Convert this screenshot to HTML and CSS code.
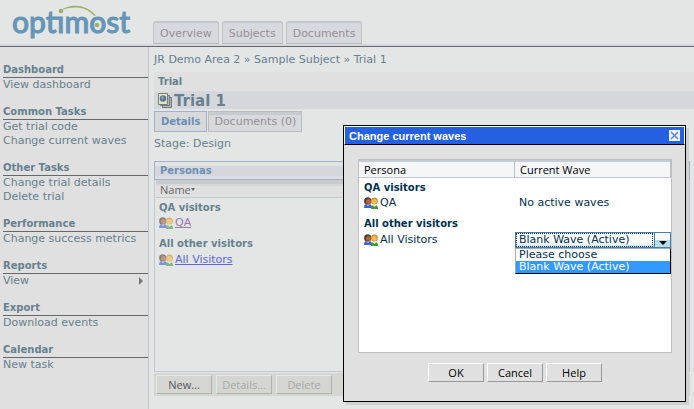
FILE: index.html
```html
<!DOCTYPE html>
<html lang="en">
<head>
<meta charset="utf-8">
<title>Optimost - Trial 1</title>
<link rel="stylesheet" href="styles.css">
</head>
<body>
<svg class="defs" aria-hidden="true">
  <symbol id="people" viewBox="0 0 14 12">
    <path d="M0 11c0-3 1-4 3-4h2c2 0 3 1 3 4z" fill="#3c62cf"/>
    <path d="M2 7l2 2 2-2z" fill="#dfe8fb"/>
    <circle cx="3.7" cy="3.9" r="3.6" fill="#4d3b38"/>
    <circle cx="4.5" cy="4.6" r="2.5" fill="#b0643e"/>
    <path d="M7 12c0-3 1-4 3-4h1c2 0 3 1 3 4z" fill="#3f9a3c"/>
    <path d="M8.500 8l2 2 2-2z" fill="#e2f2d4"/>
    <circle cx="10.400" cy="4" r="3.500" fill="#d0902c"/>
    <circle cx="10.400" cy="4.600" r="2.500" fill="#f5b95c"/>
  </symbol>
</svg>
<div class="page">
  <header class="top">
    <a class="logo" href="#" aria-label="optimost">
      <svg width="124" height="42" viewBox="0 0 124 42">
        <text x="2" y="33" class="logo-text">optımost</text>
        <path d="M50 10.500C61 3 77 4 86 16L83.500 15.500C76 6.500 64 5.500 50 10.500z" fill="#9db166"/>
        <circle cx="51" cy="11" r="2.300" fill="#9db166"/>
        <circle cx="87" cy="25" r="2.300" fill="#9db166"/>
      </svg>
    </a>
    <nav class="main-tabs">
      <a href="#">Overview</a><a href="#">Subjects</a><a href="#">Documents</a>
    </nav>
  </header>
  <div class="columns">
    <aside class="side">
      <section><h2>Dashboard</h2><a href="#">View dashboard</a></section>
      <section><h2>Common Tasks</h2><a href="#">Get trial code</a><a href="#">Change current waves</a></section>
      <section><h2>Other Tasks</h2><a href="#">Change trial details</a><a href="#">Delete trial</a></section>
      <section><h2>Performance</h2><a href="#">Change success metrics</a></section>
      <section><h2>Reports</h2><a href="#" class="more">View</a></section>
      <section><h2>Export</h2><a href="#">Download events</a></section>
      <section><h2>Calendar</h2><a href="#">New task</a></section>
    </aside>
    <main>
      <p class="crumbs">JR Demo Area 2 » Sample Subject » Trial 1</p>
      <p class="kind">Trial</p>
      <h1>
        <svg width="14" height="15" viewBox="0 0 14 15" aria-hidden="true">
          <path d="M4.500 4.500h9v10h-9z" fill="#b5b5bc" stroke="#77777f"/>
          <path d="M2.500 2.500h9v10h-9z" fill="#b5b5bc" stroke="#77777f"/>
          <path d="M.5.5h9v11h-9z" fill="#dfe6b8" stroke="#77817b"/>
          <circle cx="5" cy="5.500" r="3.200" fill="#5b6fa8"/><path d="M3 4l2-1 1 2-2 2z" fill="#8fb387"/>
        </svg>Trial 1</h1>
      <nav class="sub-tabs"><a href="#" class="on">Details</a><a href="#">Documents (0)</a></nav>
      <p class="stage">Stage: Design</p>
      <section class="personas">
        <h2>Personas</h2>
        <div class="list">
          <table>
            <thead><tr><th>Name<i class="sort"></i></th></tr></thead>
            <tbody>
              <tr class="group"><td>QA visitors</td></tr>
              <tr><td><span class="who"><svg class="people"><use href="#people"/></svg><a href="#" class="seen">QA</a></span></td></tr>
              <tr class="group"><td>All other visitors</td></tr>
              <tr><td><span class="who"><svg class="people"><use href="#people"/></svg><a href="#">All Visitors</a></span></td></tr>
            </tbody>
          </table>
        </div>
        <div class="tools"><button>New...</button><button disabled>Details...</button><button disabled>Delete</button></div>
      </section>
    </main>
  </div>
</div>
<div class="dialog" role="dialog" aria-labelledby="dialog-title">
  <div class="bar">
    <h2 id="dialog-title">Change current waves</h2>
    <button class="close" aria-label="Close"><svg width="9" height="9" viewBox="0 0 9 9"><path d="M1 1l7 7M8 1l-7 7" stroke="#5e86d8" stroke-width="1.500"/></svg></button>
  </div>
  <div class="content">
    <div class="waves">
      <table>
        <thead><tr><th>Persona</th><th>Current Wave</th></tr></thead>
        <tbody>
          <tr class="group"><td colspan="2">QA visitors</td></tr>
          <tr><td><span class="who"><svg class="people"><use href="#people"/></svg>QA</span></td><td class="none">No active waves</td></tr>
          <tr class="group"><td colspan="2">All other visitors</td></tr>
          <tr><td><label class="who" for="wave"><svg class="people"><use href="#people"/></svg>All Visitors</label></td>
            <td class="pick"><div class="combo">
              <select id="wave"><option>Please choose</option><option selected>Blank Wave (Active)</option></select>
              <span class="arrow"></span>
              <ul class="options"><li>Please choose</li><li class="chosen">Blank Wave (Active)</li></ul>
            </div></td></tr>
        </tbody>
      </table>
    </div>
    <div class="actions"><button>OK</button><button>Cancel</button><button>Help</button></div>
  </div>
</div>
</body>
</html>
```
FILE: styles.css
```css
* { box-sizing: border-box; }
body {
  margin: 0;
  background: #e4e6e5;
  color: #66808e;
  font: 11px/14px "DejaVu Sans", Verdana, sans-serif;
}
h1, h2, p, ul { margin: 0; padding: 0; }
h2 { font-size: 10px; line-height: 14px; }
a { color: inherit; text-decoration: none; }
button, select { font: inherit; color: inherit; margin: 0; }
table { border-collapse: separate; border-spacing: 0; width: 100%; table-layout: fixed; }
th, td { padding: 0; text-align: left; }
.defs { position: absolute; width: 0; height: 0; }

.page { min-height: 100vh; display: flex; flex-direction: column; }
.top {
  display: flex;
  align-items: flex-end;
  height: 47px;
  border-bottom: 1px solid #66686d;
  background: linear-gradient(#d6d6dd, #d6d6dd) bottom / 100% 2px no-repeat;
}
.logo { width: 153px; padding-left: 10px; height: 46px; }
.logo svg { display: block; }
.logo-text { font: 500 30px Lato, sans-serif; fill: #6596b8; stroke: #6596b8; stroke-width: 1px; }
.main-tabs { display: flex; gap: 3px; }
.main-tabs a {
  padding: 4px 6px 2px;
  margin-bottom: 2px;
  border: 1px solid #c1c2c5;
  border-top: 2px solid #c4c6ca;
  border-bottom-color: #b3bccb;
  border-radius: 3px 3px 0 0;
  background: #d8d9dd;
  color: #968f98;
}

.columns { flex: 1; display: flex; }
.side {
  flex: 0 0 149px;
  padding: 16px 0 0 3px;
  background: #e0e0e0;
  border-right: 1px solid #c3c6ca;
}
.side section { margin-bottom: 13px; }
.side h2 { border-bottom: 1px solid #66686a; }
.side a { display: block; }
.side .more { display: flex; justify-content: space-between; align-items: center; padding-right: 5px; }
.more::after { content: ""; border: 4px solid transparent; border-left-color: #777; border-right: 0; }

main { flex: 1; padding: 6px 0 0 5px; }
.crumbs { margin-bottom: 5px; }
.kind {
  padding: 3px 4px 2px;
  font-size: 10px;
  font-weight: bold;
  background: #e0e0e0;
  border-bottom: 1px dotted #d6d7dd;
}
h1 {
  display: flex;
  align-items: center;
  gap: 2px;
  height: 17px;
  padding-left: 4px;
  background: #d6d7dd;
  font-size: 15px;
}
.sub-tabs { display: flex; gap: 1px; margin-top: 2px; }
.sub-tabs a {
  padding: 3px 5px 2px;
  border: 1px solid #bbbdbf;
  background: #d8d9db;
  color: #968f98;
}
.sub-tabs a:not(.on) { box-shadow: inset 0 3px #c8cacd; }
.sub-tabs .on { padding: 3px 6px 2px; border-color: #a4b1cb; color: #6b8fb5; font-size: 10px; font-weight: bold; }
.stage { margin: 5px 0 10px; }

.personas { margin-right: 4px; }
.personas > h2 {
  padding: 2px 5px 1px;
  border: 1px solid #a4b1cb;
  background: linear-gradient(#e2e3e4 4px, #d6d7dd 4px 14px, #dcdde0 14px);
  color: #6b8fb5;
}
.list { height: 192px; padding-left: 1px; border: 1px solid #c3c6d0; border-top: 0; }
.list th {
  height: 18px;
  padding: 2px 4px 0;
  border-bottom: 1px solid #c8cacc;
  background: linear-gradient(#c8cad0 4px, #d8d8da 4px 6px, #e0e0e0 6px);
  color: #666;
  font: 11px/14px "Open Sans", "Noto Sans", sans-serif;
}
.sort { display: inline-block; margin-bottom: 3px; border: 2px solid transparent; border-top: 3px solid #666; border-bottom: 0; }
.list td { height: 16px; padding-left: 3px; }
.list .group td, .waves .group td { height: 21px; padding-top: 4px; font-size: 10px; font-weight: bold; }
.list .group:first-child td, .waves .group:first-child td { height: 17px; padding-top: 2px; }
.who { display: flex; align-items: center; gap: 2px; }
.people { width: 14px; height: 12px; flex: none; }
.list .people { opacity: .6; }
.list td a { color: #5c68d8; text-decoration: underline; }
.list td a.seen { color: #9878b0; }
.tools { display: flex; gap: 4px; margin-top: 1px; padding: 2px; background: #d5d6d4; }
.tools button, .actions button {
  width: 56px;
  height: 19px;
  padding: 0;
  border: 1px solid #fff;
  border-right-color: #999;
  border-bottom-color: #999;
  background: #e0e0e0;
  color: #000;
  font: 11px/14px "Open Sans", "Noto Sans", sans-serif;
}
.tools button { border-color: #e5e7e5 #b0b2b0 #b0b2b0 #e5e7e5; background: #d5d6d4; color: #555; }
.tools button:disabled { color: #a5a7a5; }

.dialog {
  position: absolute;
  top: 125px;
  left: 343px;
  right: 8px;
  border: 1px solid #000;
  background: #e0e0e0;
  box-shadow: 3px 3px #d0d1d0;
  color: #003050;
}
.bar {
  display: flex;
  justify-content: space-between;
  align-items: center;
  height: 19px;
  padding: 0 4px;
  border: 1px solid #fff;
  border-bottom: 1px solid #000;
  background: #2460e0;
  color: #fff;
}
.bar h2 { font-family: "Liberation Sans", Arial, sans-serif; font-size: 11px; }
.close { display: grid; place-items: center; width: 11px; height: 11px; padding: 0; border: 0; background: #eef2fa; }
.content { padding: 14px 13px 14px 14px; }
.waves { height: 194px; border: 1px solid #bfc0c2; background: #fff; }
.waves th {
  height: 18px;
  padding: 2px 5px 0;
  border-right: 1px solid #bfc0c2;
  border-bottom: 1px solid #c4c8cc;
  background: linear-gradient(#c4ccd4 2px, #f4f6f8 2px);
  color: #000;
  font: 11px/14px "Open Sans", "Noto Sans", sans-serif;
}
.waves td { height: 16px; padding-left: 5px; }
.waves td.none { padding-left: 4px; }
.waves td.pick { padding: 0; }
.combo { position: relative; height: 16px; }
.combo select {
  appearance: none;
  display: block;
  width: 100%;
  height: 16px;
  padding: 0 18px 0 3px;
  border: 1px solid #4580b0;
  border-radius: 0;
  outline: 0;
  background: linear-gradient(#fff 70%, #c0e0ea);
}
.combo::before { content: ""; position: absolute; z-index: 1; inset: 1px 18px 1px 1px; border: 1px dotted #003050; pointer-events: none; }
.arrow {
  position: absolute;
  top: 1px;
  right: 1px;
  width: 16px;
  height: 14px;
  border-left: 1px solid #4580b0;
  background: linear-gradient(#f6f8f9 50%, #b8dce8 50%);
  pointer-events: none;
}
.arrow::after { content: ""; position: absolute; top: 8px; left: 4px; border: 4px solid transparent; border-top-color: #000; border-bottom: 0; }
.options {
  position: absolute;
  top: 16px;
  left: 0;
  right: 0;
  border: 1px solid #000;
  border-color: #aaa #000 #000 #aaa;
  background: #fff;
  list-style: none;
  line-height: 12px;
}
.options li { padding-left: 3px; }
.options .chosen { background: #3399ff; color: #fff; }
.actions { display: flex; justify-content: center; gap: 3px; margin: 10px 0 5px; }
```
